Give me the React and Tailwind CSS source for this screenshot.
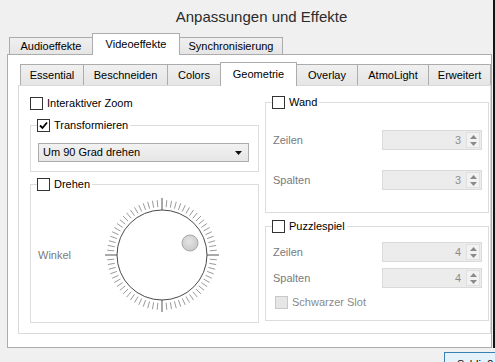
import React from "react";

const outerTabs = [
  { label: "Audioeffekte", w: "w-[84px]" },
  { label: "Videoeffekte", w: "w-[88px]", active: true },
  { label: "Synchronisierung", w: "w-[104px]" },
];

const innerTabs = [
  { label: "Essential", w: "w-[64px]" },
  { label: "Beschneiden", w: "w-[85px]" },
  { label: "Colors", w: "w-[54px]" },
  { label: "Geometrie", w: "w-[77px]", active: true },
  { label: "Overlay", w: "w-[62px]" },
  { label: "AtmoLight", w: "w-[72px]" },
  { label: "Erweitert", w: "w-[63px]" },
];

function Tab({ label, w, active, h, hActive }) {
  return (
    <div
      className={`${w} -ml-px first:ml-0 flex items-center justify-center border border-b-0 border-[#acacac] ${
        active ? `${hActive} -mb-px bg-white relative z-10` : `${h} bg-gradient-to-b from-[#f0f0f0] to-[#e5e5e5]`
      }`}
    >
      {label}
    </div>
  );
}

function Check({ checked, disabled }) {
  return (
    <div
      className={`w-[13px] h-[13px] shrink-0 border flex items-center justify-center ${
        disabled ? "border-[#c8c8c8] bg-[#e6e6e6]" : "border-[#333] bg-white"
      }`}
    >
      {checked && (
        <svg width="9" height="9" viewBox="0 0 9 9">
          <path d="M1 4.5 L3.5 7 L8 1.5" fill="none" stroke="#000" strokeWidth="1.8" />
        </svg>
      )}
    </div>
  );
}

function GroupTitle({ label, checked, className = "" }) {
  return (
    <div className={`-mt-[7px] ml-[6px] w-fit flex items-center gap-[4px] bg-white pr-[2px] h-[13px] ${className}`}>
      <Check checked={checked} />
      <span>{label}</span>
    </div>
  );
}

function Spin({ value }) {
  return (
    <div className="w-[100px] h-[20px] border border-[#dadada] bg-[#ececec] flex items-center">
      <span className="flex-1 text-right pr-[5px] text-[#8c8c8c]">{value}</span>
      <div className="w-[14px] h-[16px] mr-[1px] border border-[#e0e0e0] bg-[#f2f2f2] flex flex-col items-center justify-center gap-[3px]">
        <svg width="7" height="4" viewBox="0 0 7 4">
          <path d="M0 4 L3.5 0 L7 4 Z" fill="#8a8a8a" />
        </svg>
        <svg width="7" height="4" viewBox="0 0 7 4">
          <path d="M0 0 L3.5 4 L7 0 Z" fill="#8a8a8a" />
        </svg>
      </div>
    </div>
  );
}

function Dial() {
  const ticks = [];
  for (let i = 0; i < 72; i++) {
    const a = (i * 5 * Math.PI) / 180;
    const major = i % 18 === 0;
    const r1 = major ? 45 : 48;
    const r2 = major ? 57 : 55;
    ticks.push(
      <line
        key={i}
        x1={60 + r1 * Math.sin(a)}
        y1={60 - r1 * Math.cos(a)}
        x2={60 + r2 * Math.sin(a)}
        y2={60 - r2 * Math.cos(a)}
        stroke={major ? "#555" : "#9a9a9a"}
        strokeWidth="1"
      />
    );
  }
  return (
    <svg width="120" height="120" viewBox="0 0 120 120">
      {ticks}
      <circle cx="60" cy="60" r="45" fill="#fff" stroke="#4a4a4a" strokeWidth="1" />
      <defs>
        <radialGradient id="knob" cx="0.45" cy="0.4" r="0.6">
          <stop offset="0" stopColor="#e4e4e4" />
          <stop offset="1" stopColor="#c9c9c9" />
        </radialGradient>
      </defs>
      <circle cx="88" cy="48" r="8" fill="url(#knob)" stroke="#a8a8a8" strokeWidth="1" />
    </svg>
  );
}

export default function App() {
  return (
    <div
      className="w-[495px] h-[362px] overflow-hidden bg-[#f0f0f0] flex flex-col text-[11px] text-black"
      style={{ fontFamily: '"Liberation Sans", Arial, sans-serif' }}
    >
      <div className="h-[348px] flex">
        <div className="w-[493px] flex flex-col">
          {/* window title */}
          <div className="h-[33px] pl-[30px] pt-[6px] text-center text-[15px] text-[#2b2b2b]">
            Anpassungen und Effekte
          </div>

          {/* outer tabs */}
          <div className="h-[21px] pl-[9px] flex items-end relative z-10">
            {outerTabs.map(t => (
              <Tab key={t.label} {...t} h="h-[17px]" hActive="h-[22px]" />
            ))}
          </div>

          <div className="ml-[7px] w-[485px] h-[294px] border border-[#acacac] bg-white">
            {/* inner tabs */}
            <div className="h-[30px] pl-[12px] flex items-end relative z-10">
              {innerTabs.map(t => (
                <Tab key={t.label} {...t} h="h-[21px]" hActive="h-[24px]" />
              ))}
            </div>

            <div className="ml-[10px] w-[473px] h-[249px] border border-[#d9d9d9] pt-[11px] pl-[11px] flex gap-[6px]">
              {/* left column */}
              <div className="w-[229px] flex flex-col">
                <div className="h-[13px] flex items-center gap-[4px]">
                  <Check />
                  <span>Interaktiver Zoom</span>
                </div>

                <div className="mt-[15px] border border-[#dcdcdc] pb-[9px]">
                  <GroupTitle label="Transformieren" checked />
                  <div className="mt-[11px] ml-[7px] w-[211px] h-[19px] border border-[#acacac] bg-gradient-to-b from-[#f2f2f2] to-[#e6e6e6] flex items-center pl-[4px] pr-[6px]">
                    <span className="flex-1">Um 90 Grad drehen</span>
                    <svg width="7" height="4" viewBox="0 0 7 4">
                      <path d="M0 0 L7 0 L3.5 4 Z" fill="#111" />
                    </svg>
                  </div>
                </div>

                <div className="mt-[12px] h-[139px] border border-[#dcdcdc]">
                  <GroupTitle label="Drehen" />
                  <div className="mt-[4px] flex items-center">
                    <span className="ml-[7px] w-[64px] text-[#7a7a7a]">Winkel</span>
                    <Dial />
                  </div>
                </div>
              </div>

              {/* right column */}
              <div className="w-[224px] flex flex-col">
                <div className="mt-[5px] border border-[#dcdcdc] pb-[22px]">
                  <GroupTitle label="Wand" />
                  <div className="mt-[21px] flex items-center justify-between pl-[7px] pr-[6px]">
                    <span className="text-[#7a7a7a]">Zeilen</span>
                    <Spin value="3" />
                  </div>
                  <div className="mt-[20px] flex items-center justify-between pl-[7px] pr-[6px]">
                    <span className="text-[#7a7a7a]">Spalten</span>
                    <Spin value="3" />
                  </div>
                </div>

                <div className="mt-[13px] border border-[#dcdcdc] pb-[11px]">
                  <GroupTitle label="Puzzlespiel" />
                  <div className="mt-[9px] flex items-center justify-between pl-[7px] pr-[6px]">
                    <span className="text-[#7a7a7a]">Zeilen</span>
                    <Spin value="4" />
                  </div>
                  <div className="mt-[6px] flex items-center justify-between pl-[7px] pr-[6px]">
                    <span className="text-[#7a7a7a]">Spalten</span>
                    <Spin value="4" />
                  </div>
                  <div className="mt-[8px] ml-[9px] h-[13px] flex items-center gap-[4px]">
                    <Check disabled />
                    <span className="text-[#8a8a8a]">Schwarzer Slot</span>
                  </div>
                </div>
              </div>
            </div>
          </div>
        </div>
        <div className="w-[2px] bg-[#151515]" />
      </div>

      {/* bottom button row */}
      <div className="flex-1 pl-[444px] pt-[4px]">
        <div className="w-[80px] h-[22px] border border-[#3c7fb1] bg-[#e5f1fb] pl-[12px] pt-[3px]">
          Schließen
        </div>
      </div>
    </div>
  );
}
